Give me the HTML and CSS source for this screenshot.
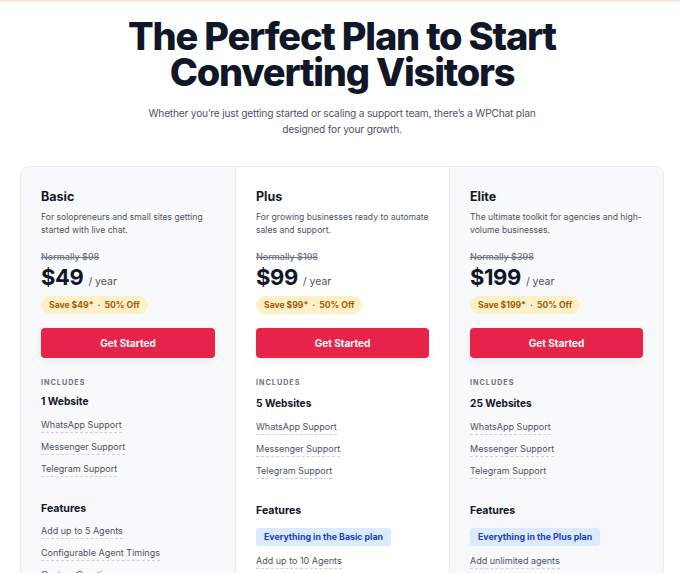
FILE: index.html
```html
<!DOCTYPE html>
<html lang="en">
<head>
<meta charset="utf-8">
<title>WPChat Pricing</title>
<link rel="stylesheet" href="styles.css">
</head>
<body>
<div class="topline"></div>
<main class="page">
  <header class="hero">
    <h1 class="title">The Perfect Plan to Start<br>Converting Visitors</h1>
    <p class="subtitle">Whether you’re just getting started or scaling a support team, there’s a WPChat plan<br>designed for your growth.</p>
  </header>

  <section class="plans">
    <div class="plan">
      <h2 class="plan-name">Basic</h2>
      <p class="plan-desc">For solopreneurs and small sites getting started with live chat.</p>
      <div class="old-price">Normally $98</div>
      <div class="price"><span class="amount">$49</span><span class="per">/ year</span></div>
      <span class="save">Save $49* &nbsp;·&nbsp; 50% Off</span>
      <a class="btn" href="#">Get Started</a>
      <div class="label">INCLUDES</div>
      <div class="sites">1 Website</div>
      <ul class="list">
        <li><span>WhatsApp Support</span></li>
        <li><span>Messenger Support</span></li>
        <li><span>Telegram Support</span></li>
      </ul>
      <div class="feat-head">Features</div>
      <ul class="list">
        <li><span>Add up to 5 Agents</span></li>
        <li><span>Configurable Agent Timings</span></li>
        <li><span>Custom Greetings</span></li>
      </ul>
    </div>

    <div class="plan plan-featured">
      <h2 class="plan-name">Plus</h2>
      <p class="plan-desc">For growing businesses ready to automate sales and support.</p>
      <div class="old-price">Normally $198</div>
      <div class="price"><span class="amount">$99</span><span class="per">/ year</span></div>
      <span class="save">Save $99* &nbsp;·&nbsp; 50% Off</span>
      <a class="btn" href="#">Get Started</a>
      <div class="label">INCLUDES</div>
      <div class="sites sites-alt">5 Websites</div>
      <ul class="list">
        <li><span>WhatsApp Support</span></li>
        <li><span>Messenger Support</span></li>
        <li><span>Telegram Support</span></li>
      </ul>
      <div class="feat-head">Features</div>
      <span class="tag">Everything in the Basic plan</span>
      <ul class="list">
        <li><span>Add up to 10 Agents</span></li>
        <li><span>Agent Reports</span></li>
      </ul>
    </div>

    <div class="plan">
      <h2 class="plan-name">Elite</h2>
      <p class="plan-desc">The ultimate toolkit for agencies and high-volume businesses.</p>
      <div class="old-price">Normally $398</div>
      <div class="price"><span class="amount">$199</span><span class="per">/ year</span></div>
      <span class="save">Save $199* &nbsp;·&nbsp; 50% Off</span>
      <a class="btn" href="#">Get Started</a>
      <div class="label">INCLUDES</div>
      <div class="sites sites-alt">25 Websites</div>
      <ul class="list">
        <li><span>WhatsApp Support</span></li>
        <li><span>Messenger Support</span></li>
        <li><span>Telegram Support</span></li>
      </ul>
      <div class="feat-head">Features</div>
      <span class="tag">Everything in the Plus plan</span>
      <ul class="list">
        <li><span>Add unlimited agents</span></li>
        <li><span>White Label</span></li>
      </ul>
    </div>
  </section>
</main>
</body>
</html>
```

FILE: styles.css
```css
* { box-sizing: border-box; }

html, body {
  margin: 0;
  padding: 0;
  background: #ffffff;
  height: 573px;
  overflow: hidden;
}

body {
  font-family: "Inter", "Noto Sans", sans-serif;
  color: #111827;
}

.topline {
  height: 2px;
  background: #fbe7de;
}

.page {
  padding: 0 16px 0 20px;
}

.hero {
  text-align: center;
  padding-top: 16px;
}

.title {
  margin: 0;
  font-size: 38px;
  font-weight: 800;
  line-height: 36px;
  letter-spacing: -1.2px;
  color: #0f1729;
}

.subtitle {
  margin: 15px 0 0;
  font-size: 10.2px;
  line-height: 16px;
  letter-spacing: -0.2px;
  color: #4b5563;
}

.plans {
  margin-top: 29px;
  display: grid;
  grid-template-columns: repeat(3, 1fr);
  border: 1px solid #e9ecf0;
  border-radius: 8px;
  background: #f8f9fb;
  overflow: hidden;
}

.plan {
  padding: 22px 20px 0;
  display: flex;
  flex-direction: column;
  align-items: flex-start;
  min-height: 420px;
}

.plan + .plan {
  border-left: 1px solid #e9ecf0;
}

.plan-featured {
  background: #ffffff;
}

.plan-name {
  margin: 0;
  font-size: 12.5px;
  font-weight: 700;
  line-height: 16px;
  color: #111827;
}

.plan-desc {
  margin: 6px 0 0;
  font-size: 8.6px;
  line-height: 13px;
  color: #4b5563;
}

.old-price {
  margin-top: 14px;
  font-size: 9px;
  line-height: 12px;
  font-weight: 500;
  color: #6b7280;
  text-decoration: line-through;
}

.price {
  margin-top: 1px;
  display: flex;
  align-items: baseline;
  gap: 5px;
  line-height: 26px;
}

.amount {
  font-size: 22px;
  font-weight: 700;
  letter-spacing: -0.4px;
  color: #0f1729;
}

.per {
  font-size: 10.5px;
  color: #4b5563;
}

.save {
  margin-top: 1px;
  display: inline-block;
  background: #fdefc8;
  color: #a15c07;
  font-size: 8.6px;
  font-weight: 700;
  line-height: 18px;
  padding: 0 8px;
  border-radius: 9px;
}

.btn {
  margin-top: 14px;
  width: 100%;
  height: 30px;
  display: flex;
  align-items: center;
  justify-content: center;
  background: #e8234a;
  color: #ffffff;
  font-size: 10px;
  font-weight: 700;
  text-decoration: none;
  border-radius: 4px;
  box-shadow: 0 4px 8px rgba(17, 24, 39, 0.06);
}

.label {
  margin-top: 20px;
  font-size: 7.2px;
  line-height: 10px;
  font-weight: 700;
  letter-spacing: 1px;
  color: #6b7280;
}

.sites {
  margin-top: 6px;
  font-size: 10.2px;
  line-height: 14px;
  font-weight: 700;
  color: #111827;
}

.sites-alt {
  margin-top: 8px;
}

.list {
  list-style: none;
  margin: 7px 0 0;
  padding: 0;
}

.list li {
  height: 22px;
  display: flex;
  align-items: center;
}

.list li span {
  font-size: 9px;
  line-height: 12px;
  color: #4b5563;
  border-bottom: 1px dashed #cfd4dc;
  padding-bottom: 1px;
}

.feat-head {
  margin-top: 21px;
  font-size: 10.6px;
  line-height: 14px;
  font-weight: 700;
  color: #111827;
}

.feat-head + .list {
  margin-top: 5px;
}

.tag {
  margin-top: 10px;
  display: inline-block;
  background: #dbeafe;
  color: #1e40af;
  font-size: 8.8px;
  font-weight: 700;
  line-height: 18px;
  padding: 0 8px;
  border-radius: 3px;
}

.tag + .list {
  margin-top: 5px;
}
```
